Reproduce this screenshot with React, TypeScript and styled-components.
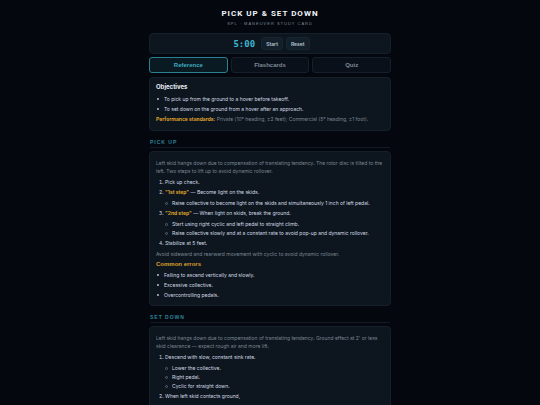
import React, { useState } from "react";
import styled, { createGlobalStyle } from "styled-components";

const GlobalStyle = createGlobalStyle`
  *, *::before { box-sizing: border-box; }
  html { height: 100%; background: #04070e; }
  body {
    margin: 0;
    height: 100%;
    overflow: hidden;
    color: #d3dbe4;
    font-family: Inter, "Liberation Sans", sans-serif;
    font-size: 5px;
    line-height: 8px;
  }
`;

const Page = styled.main`
  max-width: 242px;
  margin: 0 auto;
  padding-top: 9px;
`;

const Header = styled.header`
  text-align: center;
`;

const Title = styled.h1`
  margin: 0;
  color: #f1f5f9;
  font-family: Roboto, "Liberation Sans", sans-serif;
  font-size: 8px;
  line-height: 10px;
  letter-spacing: 1px;
`;

const Subtitle = styled.p`
  margin: 2px 0 0;
  color: #7b8794;
  font-family: "Liberation Sans", Arial, sans-serif;
  font-size: 4px;
  line-height: 6px;
  letter-spacing: 1px;
`;

const Panel = styled.section`
  border: 1px solid #15202a;
  border-radius: 4px;
  background: #0d151e;
`;

const TimerBar = styled(Panel)`
  display: flex;
  align-items: center;
  justify-content: center;
  gap: 3px;
  height: 21px;
  margin-top: 6px;
  padding-left: 3px;
`;

const Clock = styled.time`
  margin-right: 3px;
  color: #3fb4cf;
  font: bold 9px/10px "DejaVu Sans Mono", monospace;
`;

const TimerButton = styled.button`
  height: 13px;
  padding: 0 4px;
  border: 1px solid #172531;
  border-radius: 3px;
  background: #13202c;
  color: #b9c4d0;
  font: 600 5px/8px Inter, "Liberation Sans", sans-serif;
`;

const Tabs = styled.nav`
  display: grid;
  grid-template-columns: repeat(3, 1fr);
  gap: 3px;
  margin: 3px 0 4px;
`;

const Tab = styled.button<{ $active: boolean }>`
  height: 16px;
  padding: 0;
  border: 1px solid ${(p) => (p.$active ? "#2b8092" : "#15202a")};
  border-radius: 3px;
  background: ${(p) => (p.$active ? "#0a1a23" : "#0a1019")};
  color: ${(p) => (p.$active ? "#3fa9be" : "#7d8996")};
  font: bold 6px/8px "Liberation Sans", Arial, sans-serif;
`;

const Card = styled(Panel)`
  padding: 5px 6px;
`;

const CardTitle = styled.h2`
  margin: 0 0 4px;
  color: #e9eef4;
  font-size: 6px;
  line-height: 8px;
`;

const SectionTitle = styled.h2`
  margin: 7px 1px 3px;
  padding-bottom: 1px;
  border-bottom: 1px solid #121b25;
  color: #2f8397;
  font-family: "Liberation Sans", Arial, sans-serif;
  font-size: 5px;
  line-height: 8px;
  letter-spacing: 1px;
`;

const Note = styled.p`
  margin: 2px 0;
  color: #7a8693;
`;

const Item = styled.li`
  margin-bottom: 2px;

  &:last-child { margin-bottom: 0; }
`;

const Bullets = styled.ul`
  margin: 0 0 1px;
  padding-left: 8px;
  list-style: none;
`;

const BulletItem = styled(Item)`
  &::before {
    content: "";
    display: inline-block;
    width: 2px;
    height: 2px;
    margin: 0 5px 1px -7px;
    border-radius: 1px;
    background: #b4bdc7;
    vertical-align: baseline;
  }
`;

const Steps = styled.ol`
  margin: 3px 0;
  padding-left: 9px;
`;

const SubSteps = styled.ul`
  display: grid;
  row-gap: 1px;
  margin: 3px 0 0;
  padding-left: 7px;
  list-style: none;
`;

const SubItem = styled.li`
  &::before {
    content: "";
    display: inline-block;
    width: 3px;
    height: 3px;
    margin: 0 4px 0 -7px;
    border: 1px solid #5b6671;
    border-radius: 2px;
    vertical-align: baseline;
  }
`;

const Accent = styled.strong`
  color: #dba02c;
`;

const ErrorsTitle = styled.h3`
  margin: 2px 0 3px;
  color: #dba02c;
  font: bold 6px/8px "Liberation Sans", Arial, sans-serif;
`;

const tabs = ["Reference", "Flashcards", "Quiz"];

export default function App() {
  const [active, setActive] = useState("Reference");
  return (
    <>
      <GlobalStyle />
      <Page>
        <Header>
          <Title>PICK UP &amp; SET DOWN</Title>
          <Subtitle>SPL · MANEUVER STUDY CARD</Subtitle>
        </Header>
        <TimerBar>
          <Clock>5:00</Clock>
          <TimerButton>Start</TimerButton>
          <TimerButton>Reset</TimerButton>
        </TimerBar>
        <Tabs>
          {tabs.map((t) => (
            <Tab key={t} $active={t === active} onClick={() => setActive(t)}>{t}</Tab>
          ))}
        </Tabs>
        <Card>
          <CardTitle>Objectives</CardTitle>
          <Bullets>
            <BulletItem>To pick up from the ground to a hover before takeoff.</BulletItem>
            <BulletItem>To set down on the ground from a hover after an approach.</BulletItem>
          </Bullets>
          <Note><Accent>Performance standards:</Accent> Private (10° heading, ±2 feet); Commercial (5° heading, ±1 foot).</Note>
        </Card>
        <SectionTitle>PICK UP</SectionTitle>
        <Card>
          <Note>Left skid hangs down due to compensation of translating tendency. The rotor disc is tilted to the left. Two steps to lift up to avoid dynamic rollover.</Note>
          <Steps>
            <Item>Pick up check.</Item>
            <Item><Accent>"1st step"</Accent> — Become light on the skids.
              <SubSteps>
                <SubItem>Raise collective to become light on the skids and simultaneously 1 inch of left pedal.</SubItem>
              </SubSteps>
            </Item>
            <Item><Accent>"2nd step"</Accent> — When light on skids, break the ground.
              <SubSteps>
                <SubItem>Start using right cyclic and left pedal to straight climb.</SubItem>
                <SubItem>Raise collective slowly and at a constant rate to avoid pop-up and dynamic rollover.</SubItem>
              </SubSteps>
            </Item>
            <Item>Stabilize at 5 feet.</Item>
          </Steps>
          <Note>Avoid sideward and rearward movement with cyclic to avoid dynamic rollover.</Note>
          <ErrorsTitle>Common errors</ErrorsTitle>
          <Bullets>
            <BulletItem>Falling to ascend vertically and slowly.</BulletItem>
            <BulletItem>Excessive collective.</BulletItem>
            <BulletItem>Overcontrolling pedals.</BulletItem>
          </Bullets>
        </Card>
        <SectionTitle>SET DOWN</SectionTitle>
        <Card>
          <Note>Left skid hangs down due to compensation of translating tendency. Ground effect at 2' or less skid clearance — expect rough air and more lift.</Note>
          <Steps>
            <Item>Descend with slow, constant sink rate.
              <SubSteps>
                <SubItem>Lower the collective.</SubItem>
                <SubItem>Right pedal.</SubItem>
                <SubItem>Cyclic for straight down.</SubItem>
              </SubSteps>
            </Item>
            <Item>When left skid contacts ground,
              <SubSteps>
                <SubItem>Left cyclic and slightly aft pedal.</SubItem>
              </SubSteps>
            </Item>
          </Steps>
        </Card>
      </Page>
    </>
  );
}
